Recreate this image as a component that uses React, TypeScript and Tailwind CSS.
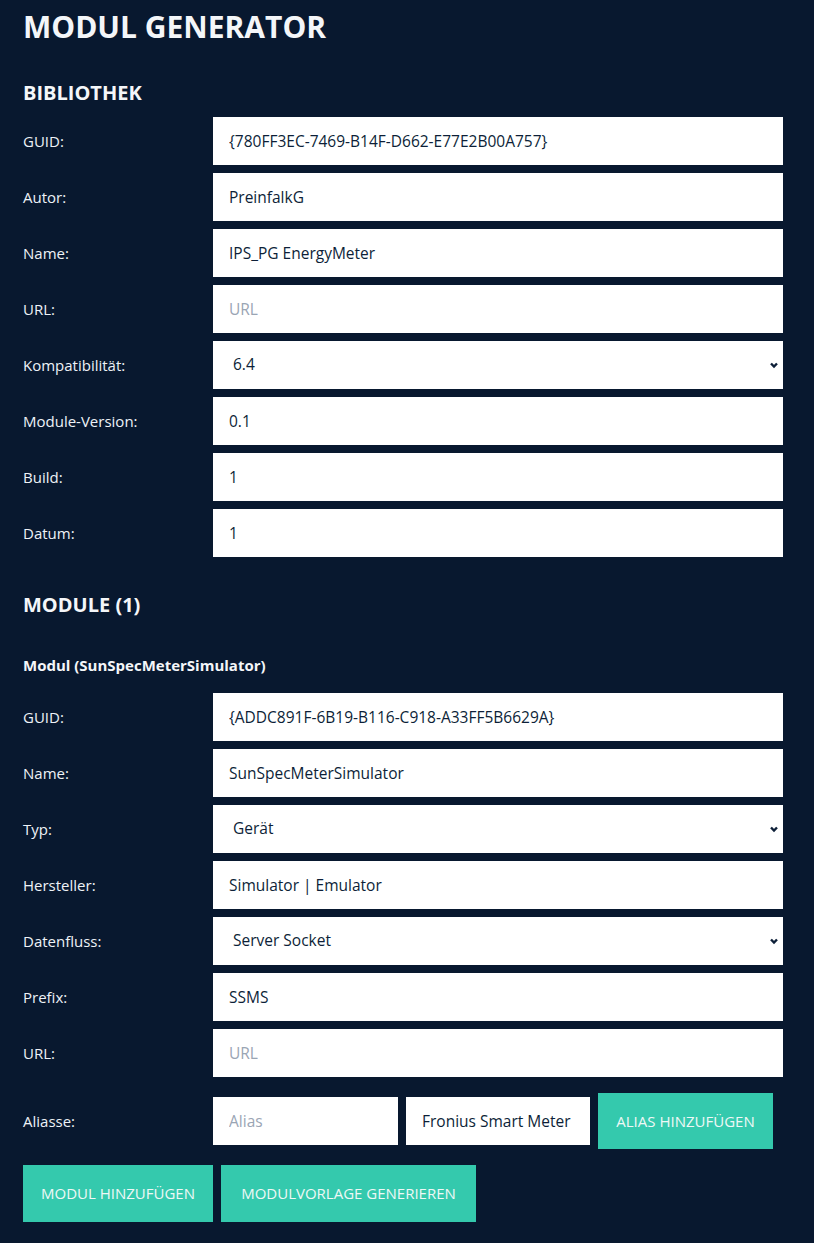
import React from 'react';

type Field = {
  label: string;
  value?: string;
  placeholder?: string;
  select?: boolean;
};

const bibliothek: Field[] = [
  { label: 'GUID:', value: '{780FF3EC-7469-B14F-D662-E77E2B00A757}' },
  { label: 'Autor:', value: 'PreinfalkG' },
  { label: 'Name:', value: 'IPS_PG EnergyMeter' },
  { label: 'URL:', placeholder: 'URL' },
  { label: 'Kompatibilität:', value: '6.4', select: true },
  { label: 'Module-Version:', value: '0.1' },
  { label: 'Build:', value: '1' },
  { label: 'Datum:', value: '1' },
];

const modul: Field[] = [
  { label: 'GUID:', value: '{ADDC891F-6B19-B116-C918-A33FF5B6629A}' },
  { label: 'Name:', value: 'SunSpecMeterSimulator' },
  { label: 'Typ:', value: 'Gerät', select: true },
  { label: 'Hersteller:', value: 'Simulator | Emulator' },
  { label: 'Datenfluss:', value: 'Server Socket', select: true },
  { label: 'Prefix:', value: 'SSMS' },
  { label: 'URL:', placeholder: 'URL' },
];

const inputCls =
  'h-12 min-w-0 bg-white px-4 text-[15.5px] text-[#0d1f38] placeholder:text-[#9aa5b4] outline-none';

const Row: React.FC<{ f: Field }> = ({ f }) => (
  <div className="flex items-center">
    <label className="w-[190px] shrink-0 text-[15px] text-[#eef2f7]">{f.label}</label>
    {f.select ? (
      <div className="relative flex-1">
        <select
          defaultValue={f.value}
          className="h-12 w-full appearance-none rounded-none bg-white pl-5 pr-8 text-[15.5px] text-[#0d1f38] outline-none"
        >
          <option>{f.value}</option>
        </select>
        {/* chevron */}
        <svg
          className="pointer-events-none absolute right-[4px] top-1/2 h-[10px] w-[10px] -translate-y-1/2"
          viewBox="0 0 10 10"
          fill="none"
          stroke="#0d1f38"
          strokeWidth="2.4"
        >
          <path d="M2 3.5 L5 6.5 L8 3.5" />
        </svg>
      </div>
    ) : (
      <input className={`${inputCls} flex-1`} defaultValue={f.value} placeholder={f.placeholder} />
    )}
  </div>
);

const App: React.FC = () => {
  return (
    <div className="min-h-screen bg-[#08182f] pl-[23px] pr-[31px] pt-[9px] pb-[21px] font-['Open_Sans',sans-serif]">
      <h1 className="text-[30px] font-bold leading-[36px] text-[#f4f6f9]">MODUL GENERATOR</h1>

      {/* Bibliothek */}
      <h2 className="mt-[34px] mb-[10px] text-[20px] font-bold leading-[28px] text-[#f4f6f9]">BIBLIOTHEK</h2>
      <div className="flex flex-col gap-2">
        {bibliothek.map((f) => (
          <Row key={f.label} f={f} />
        ))}
      </div>

      {/* Module */}
      <h2 className="mt-[34px] text-[20px] font-bold leading-[28px] text-[#f4f6f9]">MODULE (1)</h2>
      <h3 className="mt-[36px] mb-[18px] text-[15px] font-bold leading-[20px] text-[#f4f6f9]">
        Modul (SunSpecMeterSimulator)
      </h3>
      <div className="flex flex-col gap-2">
        {modul.map((f) => (
          <Row key={f.label} f={f} />
        ))}
      </div>

      {/* Aliasse */}
      <div className="mt-4 flex h-14 items-center">
        <label className="w-[190px] shrink-0 text-[15px] text-[#eef2f7]">Aliasse:</label>
        <div className="flex items-center gap-2">
          <input className={`${inputCls} w-[185px] shrink-0`} placeholder="Alias" />
          <input className={`${inputCls} w-[184px] shrink-0`} defaultValue="Fronius Smart Meter IP" />
          <button className="h-14 w-[175px] shrink-0 whitespace-nowrap bg-[#34c9ad] text-[15px] text-[#eef8f6]">
            ALIAS HINZUFÜGEN
          </button>
        </div>
      </div>

      <div className="mt-4 flex gap-2">
        <button className="h-[57px] w-[190px] whitespace-nowrap bg-[#34c9ad] text-[15px] text-[#eef8f6]">
          MODUL HINZUFÜGEN
        </button>
        <button className="h-[57px] w-[255px] whitespace-nowrap bg-[#34c9ad] text-[15px] text-[#eef8f6]">
          MODULVORLAGE GENERIEREN
        </button>
      </div>
    </div>
  );
};

export default App;
